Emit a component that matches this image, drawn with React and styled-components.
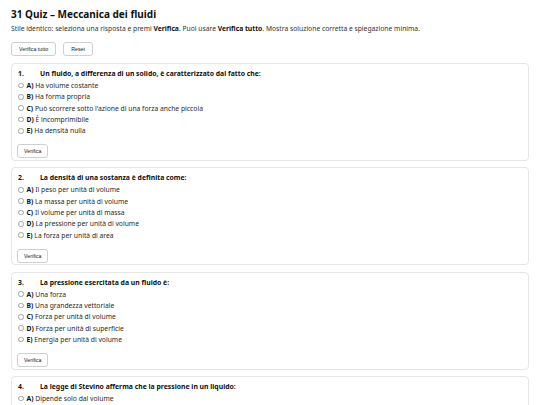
import React from 'react'
import styled, { createGlobalStyle } from 'styled-components'

const GlobalStyle = createGlobalStyle`
  body {
    margin: 0;
    background: #ffffff;
    font-family: "Noto Sans", "Open Sans", sans-serif;
    color: #1f1f1f;
  }
  * {
    box-sizing: border-box;
  }
`

const Page = styled.div`
  padding: 8px 11px 0;
  display: flex;
  flex-direction: column;
`

const Title = styled.h1`
  margin: 0;
  font-size: 10px;
  line-height: 13px;
  font-weight: 700;
  color: #111;
`

const Subtitle = styled.p`
  margin: 3px 0 0;
  font-size: 6.75px;
  line-height: 9px;
  color: #333;

  b {
    font-weight: 700;
    color: #111;
  }
`

const Toolbar = styled.div`
  display: flex;
  gap: 7px;
  margin-top: 9px;
  margin-bottom: 7px;
`

const Button = styled.button`
  font-family: "Liberation Sans", Arial, sans-serif;
  font-size: 5.3px;
  height: 14px;
  padding: 0 7px;
  background: #ffffff;
  border: 1px solid #cfcfcf;
  border-radius: 3px;
  color: #222;
  cursor: pointer;
`

const List = styled.div`
  display: flex;
  flex-direction: column;
  gap: 6.3px;
`

const Card = styled.section`
  border: 1px solid #e6e6e6;
  border-radius: 4px;
  padding: 5px 6px 6px 5px;
  height: 98px;
  flex-shrink: 0;
`

const Question = styled.div`
  display: flex;
  font-size: 6.85px;
  line-height: 9px;
  font-weight: 700;
  color: #111;
  margin-bottom: 2px;
`

const Num = styled.span`
  width: 23px;
  padding-left: 1px;
  flex-shrink: 0;
`

const Option = styled.label`
  display: flex;
  align-items: center;
  gap: 3px;
  height: 11.3px;
  font-size: 6.75px;
  color: #2a2a2a;

  b {
    font-weight: 700;
    color: #111;
  }
`

const Radio = styled.span`
  width: 5.5px;
  height: 5.5px;
  border: 0.7px solid #a3a3a3;
  border-radius: 50%;
  flex-shrink: 0;
  margin-left: 1px;
`

const CheckButton = styled(Button)`
  margin-top: 4px;
  padding: 0 6px;
`

const quiz = [
  {
    q: 'Un fluido, a differenza di un solido, è caratterizzato dal fatto che:',
    opts: [
      'Ha volume costante',
      'Ha forma propria',
      "Può scorrere sotto l'azione di una forza anche piccola",
      'È incomprimibile',
      'Ha densità nulla',
    ],
  },
  {
    q: 'La densità di una sostanza è definita come:',
    opts: [
      'Il peso per unità di volume',
      'La massa per unità di volume',
      'Il volume per unità di massa',
      'La pressione per unità di volume',
      'La forza per unità di area',
    ],
  },
  {
    q: 'La pressione esercitata da un fluido è:',
    opts: [
      'Una forza',
      'Una grandezza vettoriale',
      'Forza per unità di volume',
      'Forza per unità di superficie',
      'Energia per unità di volume',
    ],
  },
  {
    q: 'La legge di Stevino afferma che la pressione in un liquido:',
    opts: [
      'Dipende solo dal volume',
      'Aumenta linearmente con la profondità',
      'È uguale in ogni punto',
      'Diminuisce con la profondità',
      'Dipende dalla forma del recipiente',
    ],
  },
]

const letters = ['A', 'B', 'C', 'D', 'E']

const App = () => (
  <Page>
    <GlobalStyle />
    <Title>31 Quiz – Meccanica dei fluidi</Title>
    <Subtitle>
      Stile identico: seleziona una risposta e premi <b>Verifica</b>. Puoi usare <b>Verifica tutto</b>. Mostra soluzione corretta e spiegazione minima.
    </Subtitle>
    <Toolbar>
      <Button>Verifica tutto</Button>
      <Button>Reset</Button>
    </Toolbar>
    <List>
      { quiz.map((item, i) => (
        <Card key={ i }>
          <Question>
            <Num>{ i + 1 }.</Num>
            <span>{ item.q }</span>
          </Question>
          { item.opts.map((opt, j) => (
            <Option key={ j }>
              <Radio />
              <span><b>{ letters[j] })</b> { opt }</span>
            </Option>
          )) }
          <CheckButton>Verifica</CheckButton>
        </Card>
      )) }
    </List>
  </Page>
)

export default App
